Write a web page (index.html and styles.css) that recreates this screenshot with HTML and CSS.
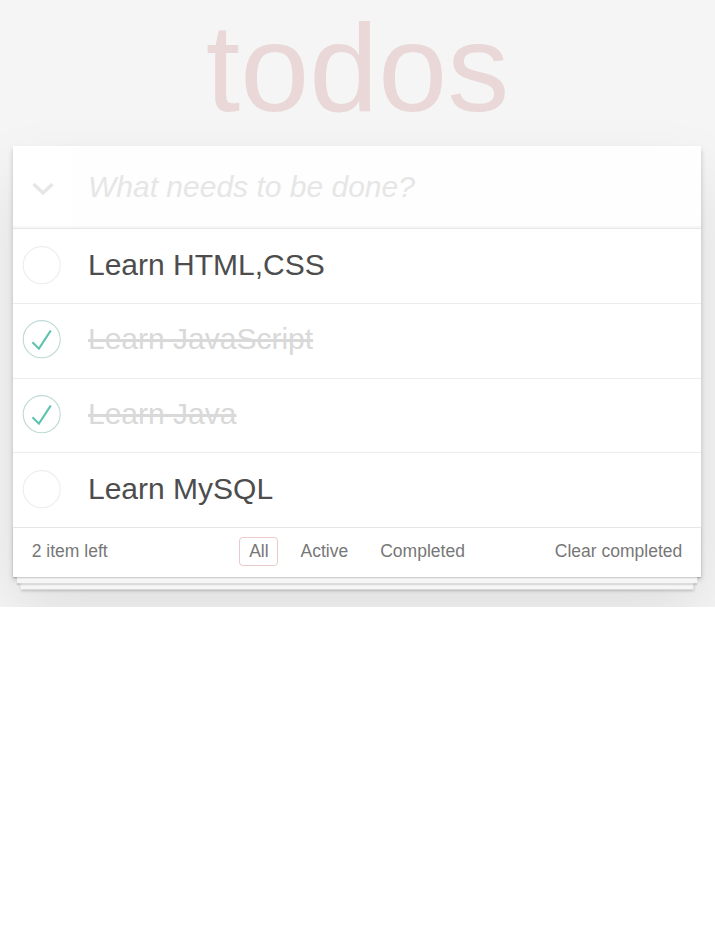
FILE: index.html
```html
<!DOCTYPE html>
<html lang="en">
<head>
<meta charset="utf-8">
<title>todos</title>
<link rel="stylesheet" href="styles.css">
</head>
<body>
<div class="page">
  <h1 class="title">todos</h1>
  <section class="todoapp">
    <header class="header">
      <label class="toggle-all" aria-label="Mark all as complete">
        <svg class="chevron" width="22" height="14" viewBox="0 0 22 14"><polyline points="1.5,2 11,11 20.5,2" fill="none" stroke="#e6e6e6" stroke-width="3.4"/></svg>
      </label>
      <input class="new-todo" placeholder="What needs to be done?">
    </header>
    <section class="main">
      <ul class="todo-list">
        <li class="todo">
          <svg class="toggle" width="50" height="50" viewBox="-10 -18 100 135"><circle cx="50" cy="50" r="50" fill="none" stroke="#ededed" stroke-width="3"/></svg>
          <label class="todo-label">Learn HTML,CSS</label>
        </li>
        <li class="todo completed">
          <svg class="toggle" width="50" height="50" viewBox="-10 -18 100 135"><circle cx="50" cy="50" r="50" fill="none" stroke="#bddad5" stroke-width="3"/><path fill="#5dc2af" d="M72 25L42 71 27 56l-4 4 20 20 34-52z"/></svg>
          <label class="todo-label">Learn JavaScript</label>
        </li>
        <li class="todo completed">
          <svg class="toggle" width="50" height="50" viewBox="-10 -18 100 135"><circle cx="50" cy="50" r="50" fill="none" stroke="#bddad5" stroke-width="3"/><path fill="#5dc2af" d="M72 25L42 71 27 56l-4 4 20 20 34-52z"/></svg>
          <label class="todo-label">Learn Java</label>
        </li>
        <li class="todo">
          <svg class="toggle" width="50" height="50" viewBox="-10 -18 100 135"><circle cx="50" cy="50" r="50" fill="none" stroke="#ededed" stroke-width="3"/></svg>
          <label class="todo-label">Learn MySQL</label>
        </li>
      </ul>
    </section>
    <footer class="footer">
      <span class="todo-count">2 item left</span>
      <ul class="filters">
        <li><a class="filter selected">All</a></li>
        <li><a class="filter">Active</a></li>
        <li><a class="filter">Completed</a></li>
      </ul>
      <span class="clear-completed">Clear completed</span>
    </footer>
  </section>
</div>
</body>
</html>
```

FILE: styles.css
```css
html {
  background: #fff;
}

body {
  margin: 0;
  font-family: "Liberation Sans", Arial, Helvetica, sans-serif;
  color: #4d4d4d;
}

.page {
  background: #f5f5f5;
  height: 607px;
  overflow: hidden;
}

.title {
  margin: 0 0 16px 0;
  padding-top: 6px;
  height: 124px;
  line-height: 124px;
  font-size: 124px;
  font-weight: 100;
  text-align: center;
  color: rgba(175, 47, 47, 0.15);
}

.todoapp {
  width: 688px;
  margin-left: 13px;
  background: #fff;
  box-shadow: 0 2.5px 5px 0 rgba(0, 0, 0, 0.2), 0 31px 62px 0 rgba(0, 0, 0, 0.1);
}

.header {
  display: flex;
  align-items: center;
  height: 82px;
  box-shadow: inset 0 -2px 1px rgba(0, 0, 0, 0.03);
}

.toggle-all {
  width: 60px;
  flex: none;
  display: flex;
  justify-content: center;
  padding-top: 3px;
}

.chevron {
  display: block;
}

.new-todo {
  flex: 1;
  min-width: 0;
  height: 82px;
  box-sizing: border-box;
  margin: 0;
  padding: 20px 20px 20px 15px;
  border: none;
  outline: none;
  background: rgba(0, 0, 0, 0.003);
  font-family: inherit;
  font-size: 30px;
  line-height: 42px;
  color: #4d4d4d;
}

.new-todo::placeholder {
  font-style: italic;
  font-weight: 300;
  color: #e6e6e6;
}

.main {
  border-top: 1px solid #e6e6e6;
}

.todo-list {
  list-style: none;
  margin: 0;
  padding: 0;
}

.todo {
  display: flex;
  align-items: flex-start;
  border-bottom: 1px solid #ededed;
}

.todo:last-child {
  border-bottom: none;
}

.toggle {
  flex: none;
  display: block;
  margin-top: 10.6px;
}

.todo-label {
  flex: 1;
  padding: 17.5px 15px 20.25px 25px;
  font-size: 30px;
  line-height: 36px;
  color: #4d4d4d;
  white-space: nowrap;
}

.completed .todo-label {
  color: #d9d9d9;
  text-decoration: line-through;
}

.footer {
  display: grid;
  grid-template-columns: 1fr auto 1fr;
  align-items: center;
  height: 25px;
  border-top: 1px solid #e6e6e6;
  padding: 11px 18.75px 13px;
  font-size: 17.5px;
  line-height: 25px;
  color: #777;
  box-shadow:
    0 1.25px 1.25px rgba(0, 0, 0, 0.2),
    0 10px 0 -3.75px #f6f6f6,
    0 11.25px 1.25px -3.75px rgba(0, 0, 0, 0.2),
    0 20px 0 -7.5px #f6f6f6,
    0 21.25px 2.5px -7.5px rgba(0, 0, 0, 0.2);
}

.todo-count {
  justify-self: start;
}

.filters {
  display: flex;
  align-items: center;
  gap: 12.5px;
  height: 25px;
  list-style: none;
  margin: 0;
  padding: 0;
}

.filter {
  display: block;
  padding: 2.5px 8.75px 4.5px;
  line-height: 20px;
  border: 1px solid transparent;
  border-radius: 3.75px;
  color: inherit;
}

.filter.selected {
  border-color: rgba(175, 47, 47, 0.25);
}

.clear-completed {
  justify-self: end;
}
```
